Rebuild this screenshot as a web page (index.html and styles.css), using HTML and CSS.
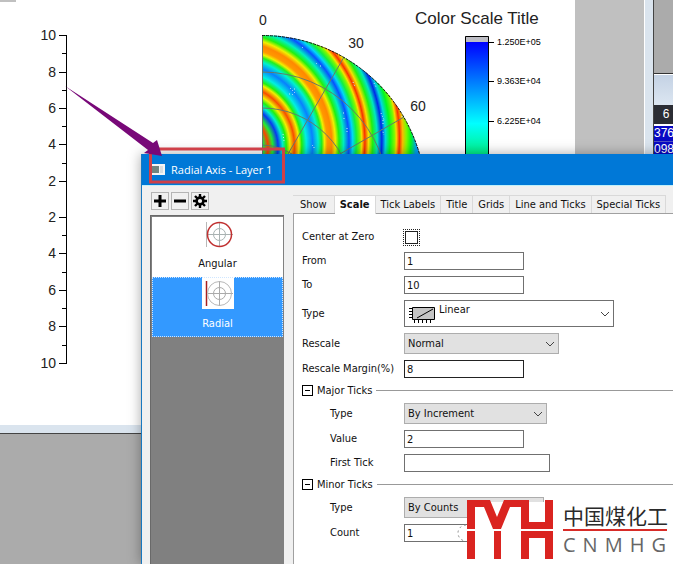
FILE: index.html
```html
<!DOCTYPE html>
<html lang="en">
<head>
<meta charset="utf-8">
<title>Radial Axis - Layer 1</title>
<link rel="stylesheet" href="styles.css">
</head>
<body>
<main class="desktop">
  <section class="graph-window" aria-label="Graph">
    <div class="page">
      <svg class="plot" width="575" height="425" viewBox="0 0 575 425" role="img" aria-label="Polar contour plot">
        <defs>
          <radialGradient id="waves" gradientUnits="userSpaceOnUse" cx="220" cy="137" r="200" fx="238" fy="150">
            <stop offset="0.11" stop-color="#1040f0"/>
            <stop offset="0.14" stop-color="#10f040"/>
            <stop offset="0.165" stop-color="#ff4000"/>
            <stop offset="0.19" stop-color="#20f030"/>
            <stop offset="0.22" stop-color="#0838f0"/>
            <stop offset="0.245" stop-color="#00f0d0"/>
            <stop offset="0.265" stop-color="#20f010"/>
            <stop offset="0.285" stop-color="#f0f000"/>
            <stop offset="0.31" stop-color="#f84c00"/>
            <stop offset="0.335" stop-color="#f0f000"/>
            <stop offset="0.35" stop-color="#20f010"/>
            <stop offset="0.375" stop-color="#00f0e0"/>
            <stop offset="0.41" stop-color="#0880ff"/>
            <stop offset="0.44" stop-color="#00f0d0"/>
            <stop offset="0.46" stop-color="#20f020"/>
            <stop offset="0.475" stop-color="#f0f000"/>
            <stop offset="0.49" stop-color="#ff9800"/>
            <stop offset="0.515" stop-color="#ff8800"/>
            <stop offset="0.535" stop-color="#f0f000"/>
            <stop offset="0.555" stop-color="#20f010"/>
            <stop offset="0.58" stop-color="#00f0c0"/>
            <stop offset="0.61" stop-color="#0850ff"/>
            <stop offset="0.63" stop-color="#00d8f8"/>
            <stop offset="0.65" stop-color="#10f040"/>
            <stop offset="0.67" stop-color="#80f800"/>
            <stop offset="0.68" stop-color="#f8e000"/>
            <stop offset="0.697" stop-color="#f83000"/>
            <stop offset="0.717" stop-color="#f8e000"/>
            <stop offset="0.74" stop-color="#20f010"/>
            <stop offset="0.765" stop-color="#00e8c0"/>
            <stop offset="0.79" stop-color="#0028e8"/>
            <stop offset="0.81" stop-color="#00d8e0"/>
            <stop offset="0.835" stop-color="#00f820"/>
            <stop offset="0.86" stop-color="#80f800"/>
            <stop offset="0.87" stop-color="#f8d800"/>
            <stop offset="0.887" stop-color="#f83000"/>
            <stop offset="0.905" stop-color="#f8c000"/>
            <stop offset="0.925" stop-color="#80f800"/>
            <stop offset="0.95" stop-color="#00f820"/>
            <stop offset="0.98" stop-color="#00a0f8"/>
          </radialGradient>
          <linearGradient id="scale" x1="0" y1="0" x2="0" y2="1">
            <stop offset="0" stop-color="#0000ff"/>
            <stop offset="0.3" stop-color="#0070ff"/>
            <stop offset="0.68" stop-color="#00ffff"/>
            <stop offset="0.95" stop-color="#00f080"/>
          </linearGradient>
          <clipPath id="quarter"><path d="M262 199V35A164 164 0 0 1 426 199Z"/></clipPath>
        </defs>
        <rect width="16" height="2" fill="#c0c0c0"/>
        <path class="axis" d="M66.500 35V363M59 35.500h8M59 72.500h8M59 108.500h8M59 144.500h8M59 181.500h8M59 217.500h8M59 253.500h8M59 290.500h8M59 326.500h8M59 363.500h8M62 53.500h5M62 90.500h5M62 126.500h5M62 163.500h5M62 235.500h5M62 272.500h5M62 308.500h5M62 345.500h5"/>
        <g class="ticks" text-anchor="end">
          <text x="56" y="40">10</text><text x="56" y="77">8</text><text x="56" y="113">6</text>
          <text x="56" y="149">4</text><text x="56" y="186">2</text><text x="56" y="222">2</text>
          <text x="56" y="258">4</text><text x="56" y="295">6</text><text x="56" y="331">8</text>
          <text x="56" y="368">10</text>
        </g>
        <path d="M262 199V35A164 164 0 0 1 426 199Z" fill="url(#waves)"/>
        <g clip-path="url(#quarter)">
          <path d="M290 88l3 3M292 95l3-3M289 94h1M294 89h1M302 47l2 2M316 63l2 2M320 66h3M353 82l2 5M344 118v3M343 113h1M347 128v5M374 83l2 4M381 113l3 7M383 120v4M382 129l2 6M312 146l2-2M314 147v2M283 134l1 7M402 116v2" stroke="#c8e8ff" stroke-dasharray="1 2" fill="none"/>
          <g class="grid">
            <path d="M262.500 35V199M262 199L344 57M262 199L404 117"/>
            <circle cx="262" cy="199" r="127"/><circle cx="262" cy="199" r="91"/><circle cx="262" cy="199" r="54"/>
          </g>
        </g>
        <path d="M262 35.500A164 164 0 0 1 426 199" fill="none" stroke="#111" stroke-dasharray="3 1"/>
        <g class="ticks" text-anchor="middle">
          <text x="263" y="25">0</text><text x="356" y="48">30</text><text x="418" y="111">60</text>
        </g>
        <text class="scale-title" x="415" y="24">Color Scale Title</text>
        <rect x="465" y="36" width="24" height="6" fill="#bdbdc4"/>
        <rect x="465" y="42" width="24" height="120" fill="url(#scale)"/>
        <path class="axis" d="M465.500 162V36.500H488.500V162M489 42.500h5M489 81.500h5M489 121.500h5"/>
        <g class="scale-labels">
          <text x="497" y="45">1.250E+05</text><text x="497" y="84">9.363E+04</text><text x="497" y="124">6.225E+04</text>
        </g>
      </svg>
    </div>
  </section>

  <section class="sheet-window" aria-label="Worksheet">
    <div class="sheet-caption"></div>
    <table class="sheet">
      <thead><tr><th>6</th></tr></thead>
      <tbody><tr><td>376</td></tr><tr><td>098</td></tr></tbody>
    </table>
  </section>

  <section class="dialog" role="dialog" aria-labelledby="dialog-title">
    <header class="titlebar">
      <svg width="14" height="11" viewBox="0 0 14 11" aria-hidden="true"><path d="M0 0h14v11H0z" fill="#f4f4f4"/><path d="M0 2h8v7H0z" fill="#6f8580"/><path d="M9 2h3v7H9z" fill="#d8dde0"/></svg>
      <h1 id="dialog-title">Radial Axis - Layer 1</h1>
    </header>
    <div class="dialog-body">
      <aside class="side">
        <div class="tools">
          <button type="button" aria-label="Add"><svg width="14" height="14" viewBox="0 0 14 14"><path d="M7 1v12M1 7h12" stroke="#000" stroke-width="3"/></svg></button>
          <button type="button" aria-label="Remove"><svg width="14" height="14" viewBox="0 0 14 14"><path d="M1 7h12" stroke="#000" stroke-width="3"/></svg></button>
          <button type="button" aria-label="Settings"><svg width="14" height="14" viewBox="0 0 14 14"><path d="M7 0v3M7 11v3M0 7h3M11 7h3M2 2l2.500 2.500M9.500 9.500L12 12M12 2L9.500 4.500M4.500 9.500L2 12" stroke="#000" stroke-width="2.400"/><circle cx="7" cy="7" r="3.400" fill="none" stroke="#000" stroke-width="2.600"/></svg></button>
        </div>
        <div class="axes">
          <button type="button" class="axis-item">
            <svg width="32" height="32" viewBox="0 0 32 32"><path d="M4.500 5v25" stroke="#b8b8b8"/><path d="M6 17.500h25M17.500 5v25" stroke="#a9b2b2"/><circle cx="17.500" cy="17.500" r="6" fill="none" stroke="#a9b2b2"/><circle cx="17.500" cy="17.500" r="12" fill="none" stroke="#c03030" stroke-width="1.500"/></svg>
            <span>Angular</span>
          </button>
          <button type="button" class="axis-item selected">
            <svg width="32" height="32" viewBox="0 0 32 32"><path d="M0 0h32v32H0z" fill="#fff"/><path d="M4.500 4v25" stroke="#a82020" stroke-width="1.500"/><path d="M6 16.500h25M17.500 4v25" stroke="#aaa"/><circle cx="17.500" cy="16.500" r="6" fill="none" stroke="#aaa"/><circle cx="17.500" cy="16.500" r="12" fill="none" stroke="#b8b8b8"/></svg>
            <span>Radial</span>
          </button>
        </div>
      </aside>
      <div class="content">
        <nav class="tabs">
          <button type="button">Show</button>
          <button type="button" class="active">Scale</button>
          <button type="button">Tick Labels</button>
          <button type="button">Title</button>
          <button type="button">Grids</button>
          <button type="button">Line and Ticks</button>
          <button type="button">Special Ticks</button>
        </nav>
        <form class="panel">
          <div class="row"><label for="center">Center at Zero</label><span class="focus"><input type="checkbox" id="center"></span></div>
          <div class="row"><label for="from">From</label><input type="text" id="from" value="1"></div>
          <div class="row"><label for="to">To</label><input type="text" id="to" value="10"></div>
          <div class="row"><label for="type">Type</label>
            <span class="pick wide">
              <select id="type"><option>Linear</option></select>
              <svg class="kind" width="28" height="18" viewBox="0 0 28 18"><path d="M4.500 1.500h22v12h-22z" fill="#c4c4c4" stroke="#000"/><path d="M9 12L25 3M1 2.500h3M1 5.500h3M1 8.500h3M1 11.500h3M6.500 14v3M10.500 14v3M14.500 14v3M18.500 14v3M22.500 14v3" stroke="#000"/></svg>
              <svg class="chevron" width="10" height="6" viewBox="0 0 10 6"><path d="M1 1l4 4 4-4"/></svg>
            </span></div>
          <div class="row"><label for="rescale">Rescale</label>
            <span class="pick medium"><select id="rescale"><option>Normal</option></select><svg class="chevron" width="10" height="6" viewBox="0 0 10 6"><path d="M1 1l4 4 4-4"/></svg></span></div>
          <div class="row"><label for="margin">Rescale Margin(%)</label><input type="text" id="margin" class="strong" value="8"></div>
          <div class="group"><button type="button" aria-label="Collapse Major Ticks"></button><span>Major Ticks</span></div>
          <div class="row nested"><label for="major">Type</label>
            <span class="pick"><select id="major"><option>By Increment</option></select><svg class="chevron" width="10" height="6" viewBox="0 0 10 6"><path d="M1 1l4 4 4-4"/></svg></span></div>
          <div class="row nested"><label for="value">Value</label><input type="text" id="value" value="2"></div>
          <div class="row nested"><label for="first">First Tick</label><input type="text" id="first" class="long"></div>
          <div class="group"><button type="button" aria-label="Collapse Minor Ticks"></button><span>Minor Ticks</span></div>
          <div class="row nested"><label for="minor">Type</label>
            <span class="pick short"><select id="minor"><option>By Counts</option></select></span></div>
          <div class="row nested"><label for="count">Count</label><input type="text" id="count" value="1"></div>
        </form>
      </div>
    </div>
  </section>

  <svg class="callout" width="290" height="190" viewBox="0 0 290 190" aria-hidden="true">
    <rect x="150.500" y="149" width="133" height="33" fill="none" stroke="#cf4048" stroke-width="3"/>
    <path d="M65 86L153 143L157 140L162 156L144 153L148 150Z" fill="#780878"/>
  </svg>

  <div class="brand">
    <svg width="87" height="60" viewBox="0 0 87 60" aria-hidden="true">
      <path d="M-1 25A8 8 0 0 0 -1 41" fill="#fff" stroke="#888" stroke-dasharray="2 3"/>
      <g fill="#da2420">
        <path d="M0 0h23l7 17 7-17h25v22h16V0h8v29H54V7H43l-9 22h-8L17 7H8v22H0z"/>
        <path d="M0 31h8v28H0zM27 31h7v28h-7zM54 31h32v28h-8V38H62v21h-8z"/>
      </g>
    </svg>
    <div class="brand-text"><strong lang="zh">中国煤化工</strong><span>CNMHG</span></div>
  </div>
</main>
</body>
</html>
```
FILE: styles.css
```css
* { box-sizing: border-box; }

body {
  margin: 0;
  font: 11px/14px "DejaVu Sans Condensed", "Noto Sans", sans-serif;
  color: #111;
}

button, input, select { font: inherit; color: inherit; margin: 0; }

.desktop {
  position: relative;
  min-height: 100vh;
  overflow: hidden;
  background: #ababab;
}

.graph-window {
  margin-right: 20px;
  background: #c0c0c0;
  border: solid #dae4ee;
  border-width: 0 8px 8px 0;
  box-shadow: 0 1px #444, 1px 0 #444;
}

.page { background: #c0c0c0; border-right: 1px solid #fff; }
.plot { display: block; background: #fff; }
.axis { fill: none; stroke: #000; }
.ticks { font: 14px "Liberation Sans", sans-serif; fill: #222; }
.scale-title { font: 17px "Liberation Sans", sans-serif; fill: #222; }
.scale-labels { font: 9px "Liberation Sans", sans-serif; }
.grid { fill: none; stroke: #687868; }

.sheet-window {
  position: absolute;
  top: 73px;
  right: 0;
  width: 19px;
  border-top: 1px solid #333;
  overflow: hidden;
}

.sheet-caption {
  height: 31px;
  background: linear-gradient(#c4d2e4, #dce6f1);
  border-top: 1px solid #fff;
}

.sheet { width: 100%; border-collapse: collapse; font: 12px/15px "Liberation Sans", sans-serif; }
.sheet th { padding: 2px 0 2px 4px; background: #2b2d34; color: #fff; font-weight: 400; border-bottom: 2px solid #fff; }
.sheet td { padding: 0; background: #0808c4; color: #fff; border-bottom: 1px solid #5050c0; }

.dialog {
  position: absolute;
  inset: 154px 0 0 141px;
  display: flex;
  flex-direction: column;
  background: #f0f0f0;
  border-left: 1px solid #1878c0;
  box-shadow: 0 0 12px rgba(0, 0, 0, 0.35);
}

.titlebar {
  display: flex;
  align-items: center;
  gap: 6px;
  height: 31px;
  padding-left: 9px;
  background: #0078d7;
  color: #fff;
}

.titlebar h1 { margin: 0; font: 11px/16px "Open Sans", sans-serif; }

.dialog-body { flex: 1; display: flex; min-height: 0; border-top: 1px solid #c0f0fa; }

.side { width: 134px; margin-left: 8px; padding-top: 6px; display: flex; flex-direction: column; gap: 5px; }
.tools { display: flex; gap: 2px; padding-left: 1px; }
.tools button { width: 18px; height: 18px; padding: 1px; border: 1px solid #b4b4b4; background: #f0f0f0; }
.tools svg { display: block; }

.axes { flex: 1; padding: 1px; background: #808080; border: 1px solid #696969; border-width: 1px 0 0 1px; }
.axis-item {
  display: flex;
  flex-direction: column;
  align-items: center;
  gap: 8px;
  width: 100%;
  height: 60px;
  padding: 0;
  border: 0;
  background: #fff;
}
.axis-item.selected { background: #3399ff; color: #fff; outline: 1px dotted #cfe6ff; outline-offset: -1px; }

.content { flex: 1; display: flex; flex-direction: column; margin-left: 9px; padding-top: 9px; min-width: 0; }
.tabs { display: flex; height: 18px; }
.tabs button {
  padding: 0 5px;
  border: solid #d9d9d9;
  border-width: 1px 1px 0 0;
  background: #f0f0f0;
  white-space: nowrap;
}
.tabs button:first-child { padding: 0 7px; }
.tabs .active { background: #fff; font-weight: 700; margin-bottom: -1px; position: relative; }

.panel {
  flex: 1;
  display: flex;
  flex-direction: column;
  gap: 6px;
  padding: 14px 0 0 8px;
  background: #fff;
  border: 1px solid #a0a0a0;
  border-width: 1px 0 0 1px;
}

.row { display: grid; grid-template-columns: 102px 1fr; align-items: center; justify-items: start; }
.nested label { padding-left: 28px; }

.row input[type="text"] {
  width: 120px;
  height: 18px;
  padding: 0 2px;
  border: 1px solid #707070;
  background: #fff;
}
.row input.long { width: 146px; }
.row input.strong { border-color: #222; }

.focus { display: flex; padding: 1px; height: 18px; align-items: center; }
.focus input {
  appearance: none;
  width: 13px;
  height: 13px;
  border: 1px solid #222;
  outline: 1px dotted #222;
  outline-offset: 1px;
}

.pick { position: relative; width: 143px; height: 21px; }
.pick select {
  appearance: none;
  width: 100%;
  height: 100%;
  padding: 0 3px;
  border: 1px solid #adadad;
  border-radius: 0;
  background: #e1e1e1;
}
.short { width: 140px; }
.medium { width: 155px; }
.wide { width: 210px; height: 27px; }
.wide select { padding: 0 0 8px 34px; background: #fff; border-color: #707070; }
.kind { position: absolute; left: 4px; top: 6px; }
.chevron { position: absolute; right: 4px; top: calc(50% - 3px); fill: none; stroke: #444; }

.group { display: flex; align-items: center; gap: 4px; height: 13px; }
.group::after { content: ""; flex: 1; height: 1px; background: #999; }
.group button {
  width: 11px;
  height: 11px;
  padding: 0;
  border: 1px solid #000;
  background: linear-gradient(#000, #000) center / 5px 1px no-repeat #fff;
}

.callout { position: absolute; left: 0; top: 0; pointer-events: none; }

.brand {
  position: absolute;
  right: 3px;
  bottom: 4px;
  display: flex;
  gap: 9px;
  width: 203px;
  background: linear-gradient(transparent 2px, #fff 2px);
}
.brand svg { overflow: visible; flex: none; }
.brand-text { flex: 1; min-width: 0; padding: 1px 3px 0 0; white-space: nowrap; }
.brand-text strong {
  display: block;
  font: 400 21px/28px "Noto Sans CJK SC", sans-serif;
  color: #2a2a2a;
  border-bottom: 2px solid #d82c28;
}
.brand-text span { display: block; font: 20px/28px "Open Sans", sans-serif; letter-spacing: 7px; color: #666; }
```
